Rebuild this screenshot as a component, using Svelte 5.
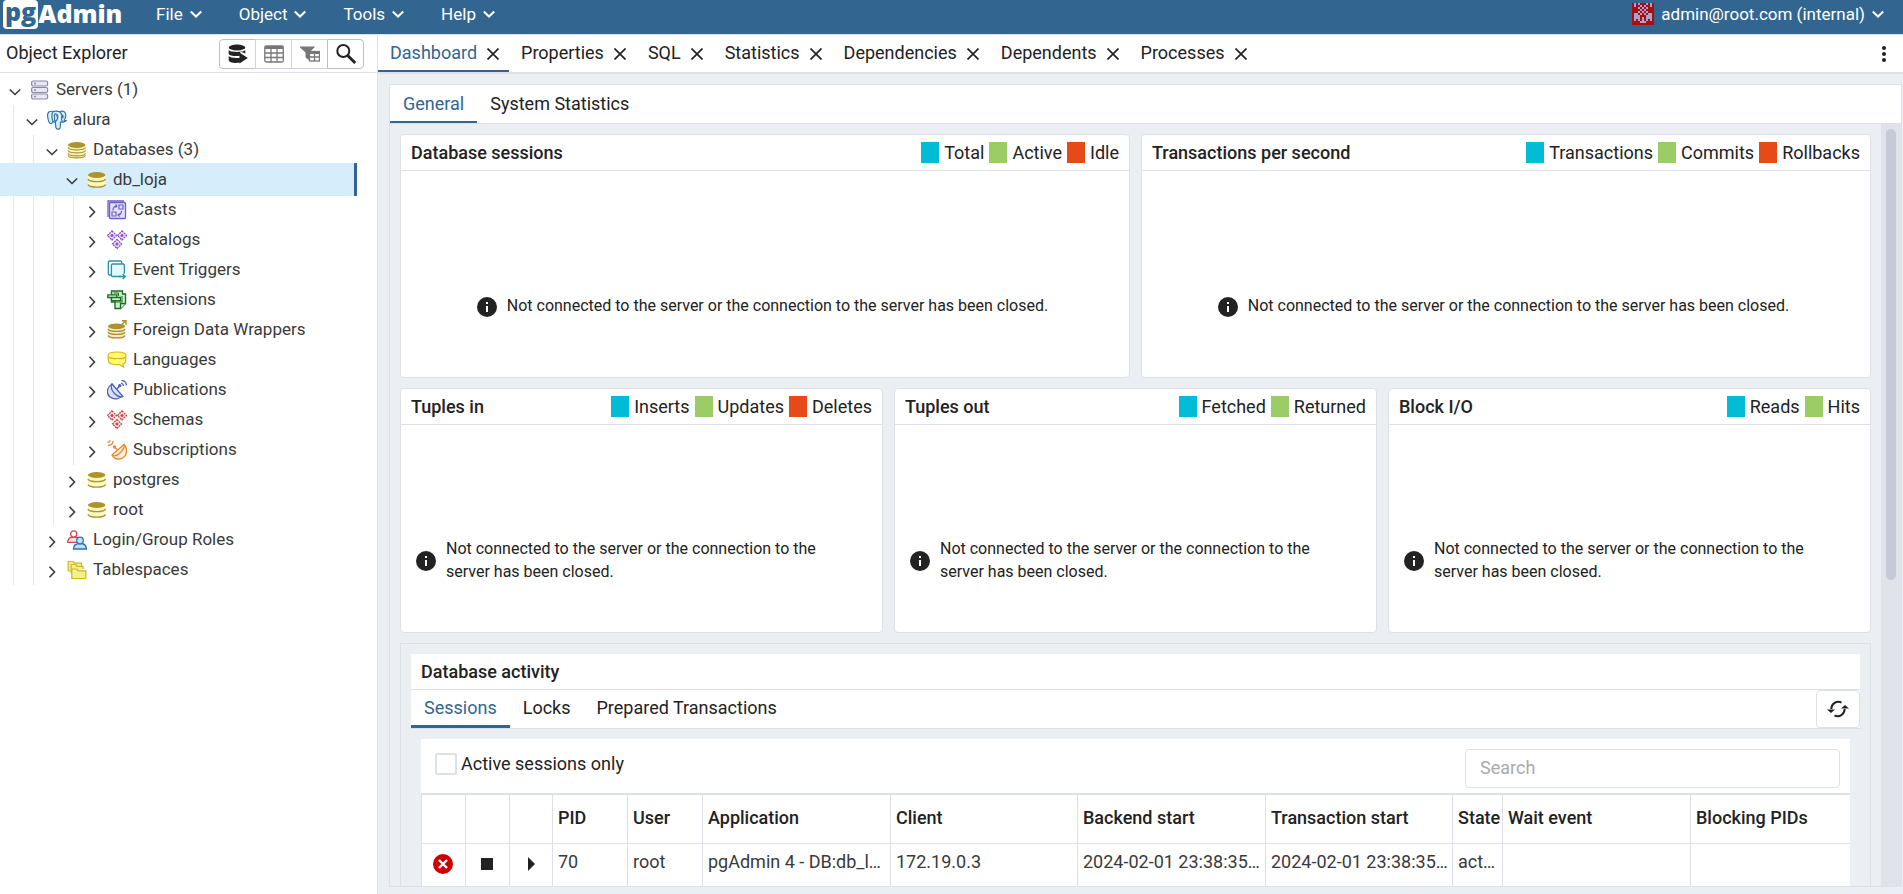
<script lang="ts">
  type Node = { label: string; icon: string; depth: number; open?: boolean; selected?: boolean };
  type Series = { label: string; color: string };

  const CYAN = '#00bcd4';
  const GREEN = '#9ccc65';
  const RED = '#e64a19';

  const menus = ['File', 'Object', 'Tools', 'Help'];
  const panels = ['Dashboard', 'Properties', 'SQL', 'Statistics', 'Dependencies', 'Dependents', 'Processes'];
  const message = 'Not connected to the server or the connection to the server has been closed.';

  const nodes: Node[] = [
    { label: 'Servers (1)', icon: 'servers', depth: 0, open: true },
    { label: 'alura', icon: 'elephant', depth: 1, open: true },
    { label: 'Databases (3)', icon: 'databases', depth: 2, open: true },
    { label: 'db_loja', icon: 'database', depth: 3, open: true, selected: true },
    { label: 'Casts', icon: 'cast', depth: 4 },
    { label: 'Catalogs', icon: 'catalog', depth: 4 },
    { label: 'Event Triggers', icon: 'trigger', depth: 4 },
    { label: 'Extensions', icon: 'extension', depth: 4 },
    { label: 'Foreign Data Wrappers', icon: 'fdw', depth: 4 },
    { label: 'Languages', icon: 'language', depth: 4 },
    { label: 'Publications', icon: 'publication', depth: 4 },
    { label: 'Schemas', icon: 'schema', depth: 4 },
    { label: 'Subscriptions', icon: 'subscription', depth: 4 },
    { label: 'postgres', icon: 'database', depth: 3 },
    { label: 'root', icon: 'database', depth: 3 },
    { label: 'Login/Group Roles', icon: 'roles', depth: 2 },
    { label: 'Tablespaces', icon: 'tablespace', depth: 2 }
  ];

  const series = (labels: string[]): Series[] =>
    labels.map((label, i) => ({ label, color: [CYAN, GREEN, RED][i] }));

  const topCharts = [
    { title: 'Database sessions', series: series(['Total', 'Active', 'Idle']) },
    { title: 'Transactions per second', series: series(['Transactions', 'Commits', 'Rollbacks']) }
  ];
  const bottomCharts = [
    { title: 'Tuples in', series: series(['Inserts', 'Updates', 'Deletes']) },
    { title: 'Tuples out', series: series(['Fetched', 'Returned']) },
    { title: 'Block I/O', series: series(['Reads', 'Hits']) }
  ];

  const columns = [
    { label: 'PID', width: 75 },
    { label: 'User', width: 75 },
    { label: 'Application', width: 188 },
    { label: 'Client', width: 187 },
    { label: 'Backend start', width: 188 },
    { label: 'Transaction start', width: 187 },
    { label: 'State', width: 50 },
    { label: 'Wait event', width: 188 },
    { label: 'Blocking PIDs', width: 188 }
  ];
  const sessions = [
    ['70', 'root', 'pgAdmin 4 - DB:db_loja', '172.19.0.3', '2024-02-01 23:38:35 UTC', '2024-02-01 23:38:35 UTC', 'active', '', '']
  ];

  // identicon cells, 11 x 11
  const avatar = [
    '01010001010', '01001010010', '00010101000', '00001010000', '00010101000', '01101010110',
    '01110001110', '01110101110', '01010101010', '00001110000', '00000000000'
  ];

  let activePanel = $state('Dashboard');
  let dashTab = $state('General');
  let activityTab = $state('Sessions');
  let activeOnly = $state(false);
  let search = $state('');
</script>

{#snippet chevron(dir: string)}
  <svg class="chev" viewBox="0 0 12 12" aria-hidden="true">
    <path d={dir === 'down' ? 'M.800 3.500l5.200 5L11.200 3.500' : 'M3.500 .800l5 5.200-5 5.200'} />
  </svg>
{/snippet}

{#snippet grid(color: string, fill: string)}
  <g fill={fill} stroke={color} stroke-width="1.300">
    <path d="M5 1l4.500 4.500L5 10 .5 5.500z M15 1l4.500 4.500L15 10l-4.500-4.500z M10 9.500l4.500 4.500L10 18.500 5.500 14z" stroke-dasharray="2 .7" />
    <path d="M5 4v3M3.500 5.500h3M15 4v3M13.500 5.500h3M10 12.500v3M8.500 14h3" stroke-width="1.500" />
  </g>
{/snippet}

{#snippet nodeIcon(name: string)}
  <svg class="node-icon" viewBox="0 0 20 20" fill="none" aria-hidden="true">
    {#if name === 'servers'}
      <g fill="#e9e8f2" stroke="#8a87a8" stroke-width="1.200">
        <rect x="1.600" y="1" width="16" height="5" rx="1.500" />
        <rect x="1.600" y="7.500" width="16" height="5" rx="1.500" />
        <rect x="1.600" y="14" width="16" height="5" rx="1.500" />
      </g>
      <path d="M4 3.500h2M4 10h2M4 16.500h2" stroke="#8a87a8" stroke-width="1.300" />
    {:else if name === 'elephant'}
      <path d="M6 1.500C2.500.5.3 2.500.6 6c.3 3 1.600 7 3 7.500 1.200.4 2-1 2.400-2 .8.600 1.800.6 2.300.2.200 2 .2 4 .7 6 .4 1.800 3.200 2 4 .3.500-1.300.3-4 .6-6 2 .6 4.800-.3 5.600-1.300-.8-.1-1.500-.1-2-.4C19 7.500 19.500 3.500 17.500 2c-1.700-1.300-3.600-.8-4.800-.2C10.500 1 8 1 6 1.500z" fill="#daeffb" stroke="#2c75a8" stroke-width="1.200" />
      <path d="M6 1.700C4.600 3 4.400 9 6 11.400M12.700 1.800c2 1.600 2.500 4 1.900 6.200-.3 1.600 0 2.700 1 3.600M8.300 11.700C6.800 10 7.600 7 7.500 4.500 8.500 3.300 10.500 4 10.800 6c.2 2-.5 4-2.500 5.700M16 5.200v3" stroke="#2c75a8" stroke-width="1.200" />
      <path d="M9 5.800h1M14.500 5h1" stroke="#2c75a8" stroke-width="1.200" />
    {:else if name === 'databases'}
      <path d="M1 5v10c0 3.800 17.500 3.800 17.500 0V5z" fill="#fdf7c3" />
      <ellipse cx="9.700" cy="5" rx="8.800" ry="2.900" fill="#ad932e" />
      <path d="M1 7.300c1 3.300 16.500 3.300 17.500 0M1 10.300c1 3.300 16.500 3.300 17.500 0M1 13.300c1 3.300 16.500 3.300 17.500 0M1 15.300c1 3.300 16.500 3.300 17.500 0" stroke="#ad932e" stroke-width="1.200" />
    {:else if name === 'database'}
      <path d="M1 5v9.500c0 3.800 17.500 3.800 17.500 0V5z" fill="#fdf7c3" />
      <ellipse cx="9.700" cy="5" rx="8.800" ry="2.900" fill="#ad932e" />
      <path d="M1 9c1 3.500 16.500 3.500 17.500 0M1 14.500c1 3.500 16.500 3.500 17.500 0" stroke="#ad932e" stroke-width="1.400" />
    {:else if name === 'cast'}
      <path d="M1 17V1h16" stroke="#6a5fc7" stroke-width="1.300" />
      <rect x="2.500" y="2.500" width="16" height="16" rx="1" fill="#e4e2fb" stroke="#6a5fc7" stroke-width="1.300" />
      <path d="M5 12h4v4H5zM12 5h4v4h-4zM6 10.500c0-3 1-4.500 4-4.500M8.500 4.300L10 6 8.500 7.700M14.500 10.800c0 2.700-1 4.200-3.500 4.200M12.500 13.300L11 15l1.500 1.700" stroke="#6a5fc7" stroke-width="1.200" />
    {:else if name === 'catalog'}
      {@render grid('#8450c0', '#eee3fa')}
    {:else if name === 'schema'}
      {@render grid('#c04848', '#fbe4e4')}
    {:else if name === 'trigger'}
      <path d="M4 15H2.500a1.200 1.200 0 0 1-1.200-1.200V2.300A1.300 1.300 0 0 1 2.500 1H13.500a1.200 1.200 0 0 1 1.200 1.200V4" stroke="#2b92a3" stroke-width="1.300" />
      <path d="M14 16.500H5.600A1.200 1.200 0 0 1 4.400 15.300V5.200A1.200 1.200 0 0 1 5.600 4h10.600a1.200 1.200 0 0 1 1.200 1.200v8.300" fill="#e2f9fb" stroke="#2b92a3" stroke-width="1.300" />
      <path d="M12 16.500h6M15.700 14l2.500 2.500-2.500 2.500" stroke="#2b92a3" stroke-width="1.500" />
    {:else if name === 'extension'}
      <path d="M4.500 4.500V1h11v3h3v9.500L13.500 18.500H8V12H4.500z" fill="#cdf0cf" stroke="#1d6d25" stroke-width="1.400" />
      <path d="M.8 4.800h9V7.500H.8zM4.500 7.500h9v3.200h-9zM13.500 18.500V13.500h5" fill="#cdf0cf" stroke="#1d6d25" stroke-width="1.300" />
      <path d="M6.500 3h5v3M15 6v6H8" stroke="#1d6d25" stroke-width="1" />
    {:else if name === 'fdw'}
      <path d="M1 6v10c0 3.500 17 3.500 17 0V6z" fill="#f3ecd5" />
      <ellipse cx="9.500" cy="6.300" rx="8.600" ry="2.900" fill="#ad932e" />
      <path d="M1 9c1 3.200 16 3.200 17 0M1 12c1 3.200 16 3.200 17 0M1 15.500c1 3.200 16 3.200 17 0" stroke="#ad932e" stroke-width="1.300" />
      <path d="M13.500 5.500l5-4.500M15 .8h4v4" stroke="#ad932e" stroke-width="1.500" />
    {:else if name === 'language'}
      <path d="M1 5.500C1 3.500 4 2 10 2s9 1.500 9 3.500c0 1-.3 2-.3 3.500v2c0 1.500-1.200 2.700-2.500 3l.3 3-4-2.500C6 15 1.500 13.700 1.500 11z" fill="#fffb70" stroke="#d6b81c" stroke-width="1.200" />
      <path d="M1.500 7c2 2 6 1.500 8.500 1.500s7 .5 8.700-1.500" stroke="#d6b81c" stroke-width="1.200" />
    {:else if name === 'publication'}
      <g fill="#dadff5" stroke="#4d62b5" stroke-width="1.300">
        <path d="M5 4C-.5 7.500-1 14 3 17c4 3.200 10 2 12-1z" />
        <path d="M5 4l11 12.500c-2 1-5.500 0-8.500-3S3.500 6.500 5 4zM9.500 9.500l3-3.500" />
        <circle cx="12.700" cy="5.700" r="1" fill="#4d62b5" />
        <path d="M14 3.200c1.500.3 2.300 1.300 2.500 2.800M14.500.4c2.800.3 4.700 2.200 5 5" fill="none" />
      </g>
    {:else if name === 'subscription'}
      <g fill="#fdeedd" stroke="#e68a2e" stroke-width="1.300">
        <path d="M17.500 5c3 4 2.700 9.500-1 12.500-3.500 2.500-9 2-11-1.500z" />
        <path d="M17 4.500L5 15c2 1.500 5.500.5 8.500-2.500s4.500-6 3.500-8zM10.500 10L7.500 7" />
        <circle cx="7.500" cy="7" r="1" fill="#e68a2e" />
        <path d="M6 1c0 2.700-1.800 4.400-5 4.500M3 .3C3 1.500 2 2.400.5 2.500" fill="none" />
      </g>
    {:else if name === 'roles'}
      <g stroke-width="1.300">
        <path d="M.7 12.300C.7 8.500 3 7 7 7s5.500 1.500 5.500 5.300z" fill="#fbe0e0" stroke="#cf4a4f" />
        <circle cx="6.700" cy="4" r="3.100" fill="#fff" stroke="#cf4a4f" />
        <path d="M6.500 19c0-4 2.500-5.500 6.700-5.500s6.200 1.500 6.200 5.500z" fill="#bfe4f5" stroke="#2e6fc0" />
        <circle cx="13" cy="10.500" r="3.300" fill="#bfe4f5" stroke="#2e6fc0" />
      </g>
    {:else}
      <g fill="#f6f08a" stroke="#cdb62c" stroke-width="1.200">
        <path d="M1.200 11V1.500h5l1.300 1.700h7V6M1.200 11h4" />
        <path d="M4.200 13.500V4.500h4.500L10 6.300h6V9M4.200 13.500h2" />
        <path d="M4.800 18.500V9h5l1.300 1.800h7.700v7.700z" />
      </g>
    {/if}
  </svg>
{/snippet}

{#snippet chart(title: string, items: Series[])}
  <section class="card">
    <header class="card-head">
      <h2>{title}</h2>
      <ul class="legend">
        {#each items as s}
          <li><span class="swatch" style="background: {s.color}"></span>{s.label}</li>
        {/each}
      </ul>
    </header>
    <div class="card-body">
      <svg class="info" viewBox="0 0 20 20" aria-hidden="true">
        <circle cx="10" cy="10" r="10" fill="#222" />
        <path d="M9 5h2v2H9zM9 9h2v6H9z" fill="#fff" />
      </svg>
      <p>{message}</p>
    </div>
  </section>
{/snippet}

<div class="app">
  <header class="menubar">
    <a class="logo" href="#home" aria-label="pgAdmin"><span class="logo-pg">pg</span><span class="logo-admin">Admin</span></a>
    <nav>
      {#each menus as m}
        <button class="menu">{m}{@render chevron('down')}</button>
      {/each}
    </nav>
    <button class="menu user">
      <svg class="avatar" viewBox="0 0 22 22" shape-rendering="crispEdges" aria-hidden="true">
        <rect width="22" height="22" fill="#a90f12" />
        {#each avatar as line, y}
          {#each line.split('') as bit, x}
            {#if bit === '1'}<rect x={x * 2} y={y * 2} width="2" height="2" fill="#a9a3c9" />{/if}
          {/each}
        {/each}
      </svg>
      <span>admin@root.com (internal)</span>{@render chevron('down')}
    </button>
  </header>

  <div class="workspace">
    <aside class="sidebar">
      <div class="side-head">
        <h1>Object Explorer</h1>
        <div class="tools">
          <button aria-label="Query Tool">
            <svg viewBox="0 0 20 20" fill="#222"><ellipse cx="9" cy="3.500" rx="8.300" ry="3" /><path d="M.7 6c1.500 2.500 15 2.500 16.600 0v3.500l-5-2v4.300C7 12.500 1.500 11.800.7 10zM.7 12c1 1.700 6.500 2.300 11.300 1.700v4.800C7 19.500 1.200 18.800.7 16.500z" /><path d="M11.500 8.500l8.300 5.500-8.300 5.500z" /></svg>
          </button>
          <button aria-label="View Data" disabled>
            <svg viewBox="0 0 20 20" fill="none" stroke="#777" stroke-width="1.300"><rect x=".8" y="2" width="18.500" height="16" rx="1.500" /><path d="M1 3.500h18" stroke-width="3" /><path d="M1 9h18M1 13.500h18M7 4v14M13 4v14" /></svg>
          </button>
          <button aria-label="Filtered Rows" disabled>
            <svg viewBox="0 0 20 20"><path d="M0 2.500h14.500v1L9 8.500V16l-3.500-2.500v-5L0 3.500z" fill="#777" /><rect x="9.500" y="7.500" width="10" height="9.500" fill="#fff" stroke="#777" stroke-width="1.300" /><path d="M9.500 9h10" stroke="#777" stroke-width="2" /><path d="M9.500 13h10M14.500 9v8" stroke="#777" stroke-width="1.300" /></svg>
          </button>
          <button aria-label="Search Objects">
            <svg viewBox="0 0 20 20" fill="none" stroke="#222"><circle cx="7.300" cy="7" r="6" stroke-width="2" /><path d="M11.700 11.500l7.500 7.500" stroke-width="2.800" /></svg>
          </button>
        </div>
      </div>
      <ul class="tree">
        {#each nodes as n}
          <li class="node" class:selected={n.selected} class:root={n.depth === 0}>
            {#each { length: n.depth } as _}<span class="indent"></span>{/each}
            <span class="toggle">{@render chevron(n.open ? 'down' : 'right')}</span>
            {@render nodeIcon(n.icon)}
            <span class="label">{n.label}</span>
          </li>
        {/each}
      </ul>
    </aside>

    <main class="main">
      <div class="panel-tabs">
        {#each panels as p}
          <div class="panel-tab" class:active={activePanel === p}>
            <button class="plain" onclick={() => (activePanel = p)}>{p}</button>
            <button class="plain close" aria-label="Close {p}">
              <svg viewBox="0 0 12 12"><path d="M.5 .5l11 11M11.500 .5l-11 11" stroke="#222" stroke-width="1.700" /></svg>
            </button>
          </div>
        {/each}
        <button class="plain more" aria-label="More options">
          <svg viewBox="0 0 4 16" fill="#222"><circle cx="2" cy="2" r="2" /><circle cx="2" cy="8" r="2" /><circle cx="2" cy="14" r="2" /></svg>
        </button>
      </div>

      <div class="dashboard">
        <div class="dash-tabs">
          {#each ['General', 'System Statistics'] as t}
            <button class="tab" class:active={dashTab === t} onclick={() => (dashTab = t)}>{t}</button>
          {/each}
        </div>
        <div class="scroller">
          <div class="content">
            <div class="charts two">
              {#each topCharts as c}{@render chart(c.title, c.series)}{/each}
            </div>
            <div class="charts three">
              {#each bottomCharts as c}{@render chart(c.title, c.series)}{/each}
            </div>

            <section class="activity">
              <h2>Database activity</h2>
              <div class="activity-tabs">
                {#each ['Sessions', 'Locks', 'Prepared Transactions'] as t}
                  <button class="tab" class:active={activityTab === t} onclick={() => (activityTab = t)}>{t}</button>
                {/each}
                <button class="refresh" aria-label="Refresh">
                  <svg viewBox="0 0 22 18" fill="none" stroke="#222" stroke-width="2">
                    <path d="M14.500 2.500C9.500.5 4.500 3.500 4.300 9M7.500 15.500c5 2 10-1 10.200-6.500" />
                    <path d="M0 9.500h8L4 13zM14 8.500h8L18 5z" fill="#222" stroke="none" />
                  </svg>
                </button>
              </div>
              <div class="sessions">
                <div class="filters">
                  <label><input type="checkbox" bind:checked={activeOnly} />Active sessions only</label>
                  <input class="search" type="text" placeholder="Search" aria-label="Search" bind:value={search} />
                </div>
                <div class="table-wrap">
                  <table>
                    <colgroup>
                      <col style="width: 44px" /><col style="width: 44px" /><col style="width: 43px" />
                      {#each columns as c}<col style="width: {c.width}px" />{/each}
                    </colgroup>
                    <thead>
                      <tr>
                        <td></td><td></td><td></td>
                        {#each columns as c}<th>{c.label}</th>{/each}
                      </tr>
                    </thead>
                    <tbody>
                      {#each sessions as row}
                        <tr>
                          <td class="action">
                            <button class="plain" aria-label="Terminate session">
                              <svg viewBox="0 0 20 20"><circle cx="10" cy="10" r="10" fill="#c00" /><path d="M6 6l8 8M14 6l-8 8" stroke="#fff" stroke-width="2.400" /></svg>
                            </button>
                          </td>
                          <td class="action">
                            <button class="plain" aria-label="Cancel query">
                              <svg viewBox="0 0 20 20"><rect x="4" y="4" width="12" height="12" fill="#222" /></svg>
                            </button>
                          </td>
                          <td class="action">
                            <button class="plain" aria-label="View details">
                              <svg viewBox="0 0 20 20"><path d="M7 3l7 7-7 7z" fill="#222" /></svg>
                            </button>
                          </td>
                          {#each row as cell}<td>{cell}</td>{/each}
                        </tr>
                      {/each}
                    </tbody>
                  </table>
                </div>
              </div>
            </section>
          </div>
          <div class="track"><div class="thumb"></div></div>
        </div>
      </div>
    </main>
  </div>
</div>

<style>
:global(body) {
  margin: 0;
}
.app {
  height: 100vh;
  display: flex;
  flex-direction: column;
  overflow: hidden;
  background: #ebeef3;
  color: #222;
  font-family: Roboto, 'Helvetica Neue', sans-serif;
  font-size: 18px;
  line-height: 24px;
}
.app * {
  box-sizing: border-box;
}
button {
  font: inherit;
  color: inherit;
  cursor: pointer;
}
h1, h2, p, ul {
  margin: 0;
  padding: 0;
  list-style: none;
}
h2 {
  font-size: 18px;
  font-weight: 500;
}
.plain {
  background: none;
  border: 0;
  padding: 0;
}
svg {
  display: block;
}
.chev {
  width: 12px;
  height: 12px;
  flex: none;
  fill: none;
  stroke: currentColor;
  stroke-width: 2;
}

.menubar {
  height: 34px;
  flex: none;
  display: flex;
  align-items: center;
  padding: 0 19px 5px 3px;
  background: #326690;
  color: #fff;
}
.logo {
  display: flex;
  align-items: flex-start;
  width: 120px;
  height: 29px;
  color: #fff;
  text-decoration: none;
  font-family: 'Open Sans', sans-serif;
  font-size: 25px;
  font-weight: 800;
  line-height: 26px;
}
.logo-pg {
  height: 29px;
  padding: 0 2px;
  background: #fff;
  color: #326690;
  border-radius: 4px;
  line-height: 22px;
}
nav {
  display: flex;
  gap: 37px;
  margin-left: 33px;
}
.menu {
  display: flex;
  align-items: center;
  gap: 7px;
  padding: 0 0 2px;
  border: 0;
  background: none;
  font-size: 17px;
}
.user {
  margin-left: auto;
}
.avatar {
  width: 22px;
  height: 22px;
}

.workspace {
  flex: 1;
  min-height: 0;
  display: flex;
  border-top: 1px solid #dde0e6;
}
.sidebar {
  width: 378px;
  flex: none;
  background: #fff;
  border-right: 1px solid #dde0e6;
}
.side-head {
  height: 38px;
  display: flex;
  align-items: center;
  justify-content: space-between;
  padding: 0 13px 0 6px;
  border-bottom: 1px solid #dde0e6;
}
h1 {
  padding-bottom: 2px;
  font-size: 18px;
  font-weight: 400;
}
.tools {
  display: flex;
}
.tools button {
  width: 37px;
  height: 30px;
  display: grid;
  place-items: center;
  padding: 0;
  margin-left: -1px;
  background: #fff;
  border: 1px solid #bac1cd;
}
.tools button:disabled {
  border-color: #cfd4dc;
}
.tools button:first-child {
  border-radius: 4px 0 0 4px;
}
.tools button:last-child {
  border-radius: 0 4px 4px 0;
}
.tools svg {
  width: 20px;
  height: 20px;
}
.tree {
  padding-top: 2px;
  font-size: 17px;
  color: #3a3a3a;
}
.node {
  height: 30px;
  display: flex;
  align-items: center;
  white-space: nowrap;
}
.node.root {
  padding-left: 3px;
}
.node.selected {
  height: 33px;
  margin: -2px 20px -1px 0;
  background: #d6edfb;
  border-right: 3px solid #326690;
}
.indent {
  width: 14px;
  align-self: stretch;
  margin-right: 6px;
  border-right: 1px solid #e8e8e8;
}
.toggle {
  width: 24px;
  margin-right: 3px;
  padding-top: 3px;
  display: grid;
  place-items: center;
}
.toggle .chev {
  stroke-width: 1.600;
}
.node-icon {
  width: 20px;
  height: 20px;
  flex: none;
  margin-right: 6px;
}
.label {
  padding-bottom: 2px;
}

.main {
  flex: 1;
  min-width: 0;
  display: flex;
  flex-direction: column;
}
.panel-tabs {
  height: 39px;
  flex: none;
  display: flex;
  background: #fff;
  border-bottom: 2px solid #dde0e6;
}
.panel-tab {
  display: flex;
  align-items: center;
  gap: 10px;
  padding: 0 10px 2px 12px;
}
.panel-tab.active {
  color: #326690;
  box-shadow: inset 0 -2px #326690;
}
.close {
  padding-top: 2px;
}
.close svg {
  width: 12px;
  height: 12px;
}
.more {
  margin-left: auto;
  padding-right: 17px;
}
.more svg {
  width: 4px;
  height: 16px;
}
.dashboard {
  flex: 1;
  min-height: 0;
  display: flex;
  flex-direction: column;
  margin: 10px 1px 7px 11px;
  border: 1px solid #dde0e6;
}
.dash-tabs {
  height: 39px;
  flex: none;
  display: flex;
  background: #fff;
  border-bottom: 1px solid #dde0e6;
}
.tab {
  padding: 0 13px 3px;
  border: 0;
  background: none;
}
.dash-tabs .tab {
  padding-bottom: 1px;
}
.tab.active {
  color: #326690;
  box-shadow: inset 0 -2px #326690;
}
.scroller {
  flex: 1;
  min-height: 0;
  display: flex;
}
.content {
  flex: 1;
  min-width: 0;
  overflow: hidden;
  padding: 10px 10px 0;
}
.track {
  width: 20px;
  flex: none;
  padding: 5px;
  background: #e0e3ea;
}
.thumb {
  width: 10px;
  height: 60%;
  border-radius: 5px;
  background: #c5cad6;
}
.charts {
  display: grid;
  gap: 11px;
  margin-bottom: 10px;
}
.two {
  grid-template-columns: repeat(2, 1fr);
}
.three {
  grid-template-columns: repeat(3, 1fr);
}
.card {
  height: 245px;
  display: flex;
  flex-direction: column;
  background: #fff;
  border: 1px solid #dde0e6;
  border-radius: 4px;
}
.two .card {
  height: 244px;
}
.card-head {
  height: 36px;
  flex: none;
  display: flex;
  align-items: center;
  justify-content: space-between;
  padding: 0 10px;
  border-bottom: 1px solid #dde0e6;
}
.legend {
  display: flex;
  gap: 5px;
}
.legend li {
  display: flex;
  align-items: center;
  gap: 5px;
}
.swatch {
  width: 18px;
  height: 21px;
}
.card-body {
  flex: 1;
  display: flex;
  align-items: center;
  justify-content: center;
  gap: 10px;
  padding: 65px 20px 0 15px;
  font-size: 16px;
  line-height: 23px;
}
.card-body p {
  padding-bottom: 2px;
}
.three .card-body {
  padding-right: 24px;
}
.info {
  width: 20px;
  height: 20px;
  flex: none;
}

.activity {
  padding: 10px;
  border: 1px solid #dde0e6;
}
.activity h2 {
  height: 36px;
  padding: 6px 10px 0;
  background: #fff;
  border-bottom: 1px solid #dde0e6;
}
.activity-tabs {
  height: 39px;
  display: flex;
  background: #fff;
  border-bottom: 1px solid #dde0e6;
}
.activity-tabs .tab.active {
  box-shadow: inset 0 -3px #326690;
}
.refresh {
  width: 44px;
  margin-left: auto;
  display: grid;
  place-items: center;
  padding: 0;
  background: #fff;
  border: 1px solid #dde0e6;
  border-radius: 4px;
}
.refresh svg {
  width: 22px;
  height: 18px;
}
.sessions {
  margin: 10px 10px 0;
  background: #fff;
}
.filters {
  height: 54px;
  display: flex;
  align-items: flex-start;
  justify-content: space-between;
  padding: 10px 10px 0 14px;
}
.filters label {
  display: flex;
  align-items: center;
  gap: 4px;
  padding-top: 3px;
}
.filters input[type='checkbox'] {
  appearance: none;
  width: 22px;
  height: 22px;
  margin: 0;
  border: 2px solid #dde0e6;
  border-radius: 2px;
  background: #fff;
}
.filters input[type='checkbox']:checked {
  background: #326690;
}
.search {
  width: 375px;
  height: 39px;
  padding: 0 14px 2px;
  border: 1px solid #dde0e6;
  border-radius: 4px;
  font: inherit;
  color: inherit;
}
.search::placeholder {
  color: #aaa;
}
.table-wrap {
  overflow: hidden;
  border-top: 2px solid #dde0e6;
  border-left: 1px solid #dde0e6;
}
table {
  width: 1457px;
  table-layout: fixed;
  border-collapse: separate;
  border-spacing: 0;
}
th, td {
  padding: 0 0 3px 5px;
  border-right: 1px solid #dde0e6;
  border-bottom: 1px solid #dde0e6;
  text-align: left;
  white-space: nowrap;
  overflow: hidden;
  text-overflow: ellipsis;
}
th {
  font-size: 18px;
  font-weight: 500;
}
thead tr {
  height: 49px;
}
tbody tr {
  height: 49px;
}
tbody td {
  padding: 0 4px 12px 5px;
  color: #3a3a3a;
}
tbody .action {
  padding: 0 1px 0 0;
}
.action svg {
  width: 20px;
  height: 20px;
}
.action button {
  display: block;
  margin: 0 auto 9px;
}
</style>
